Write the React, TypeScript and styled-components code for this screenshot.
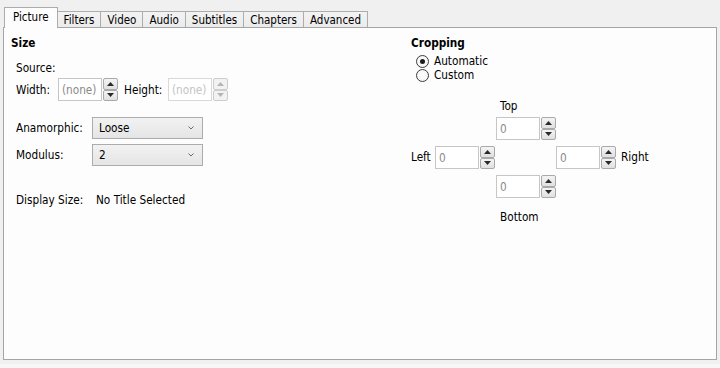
import * as React from "react";
import styled, { createGlobalStyle } from "styled-components";

const GlobalStyle = createGlobalStyle`
  html, body {
    margin: 0;
    padding: 0;
    background: #f0f0f0;
  }
  body {
    font-family: "DejaVu Sans Condensed", "DejaVu Sans", Tahoma, sans-serif;
    font-size: 11.7px;
    color: #000;
  }
`;

const Window = styled.div`
  width: 720px;
  height: 368px;
  box-sizing: border-box;
  padding: 0 3px 8px 3px;
  display: flex;
  flex-direction: column;
  background: linear-gradient(#f0f0f0 0, #f0f0f0 364px, #f7f7f7 364px);
`;

const TabStrip = styled.div`
  display: flex;
  align-items: flex-end;
  height: 27px;
  padding-left: 1px;
  position: relative;
  z-index: 2;
  font-size: 11.5px;
`;

const Tab = styled.div<{ $active?: boolean }>`
  box-sizing: border-box;
  height: ${(p) => (p.$active ? "21px" : "16px")};
  margin-bottom: ${(p) => (p.$active ? "-1px" : "0")};
  padding: 0 ${(p) => (p.$active ? "8px" : "6px")} ${(p) => (p.$active ? "2px" : "0")};
  display: flex;
  align-items: center;
  border: 1px solid #acacac;
  border-bottom: none;
  margin-right: -1px;
  background: ${(p) => (p.$active ? "#fdfdfd" : "linear-gradient(#f3f3f3, #ebebeb)")};
  position: relative;
  z-index: ${(p) => (p.$active ? 2 : 1)};
  white-space: nowrap;
`;

const Panel = styled.div`
  flex: 1;
  box-sizing: border-box;
  border: 1px solid #a5a5a5;
  background: #fdfdfd;
  display: grid;
  grid-template-columns: 400px 1fr;
  align-items: start;
  padding: 7px 0 0 7px;
`;

const Column = styled.div`
  display: flex;
  flex-direction: column;
  align-items: flex-start;
`;

const GroupTitle = styled.div`
  font-weight: bold;
  line-height: 16px;
`;

const Indented = styled.div<{ $indent: number }>`
  display: flex;
  flex-direction: column;
  align-items: flex-start;
  padding-left: ${(p) => p.$indent}px;
`;

const Text = styled.div<{ $top?: number }>`
  line-height: 16px;
  margin-top: ${(p) => p.$top ?? 0}px;
`;

const Row = styled.div<{ $top: number }>`
  display: flex;
  align-items: center;
  margin-top: ${(p) => p.$top}px;
`;

const Label = styled.span<{ $width?: number; $left?: number }>`
  display: inline-block;
  width: ${(p) => (p.$width ? `${p.$width}px` : "auto")};
  margin-left: ${(p) => p.$left ?? 0}px;
  white-space: nowrap;
`;

/* spin box */

const SpinBox = styled.div`
  display: inline-flex;
  width: 60px;
  height: 23px;
  gap: 1px;
`;

const SpinField = styled.div<{ $disabled?: boolean }>`
  box-sizing: border-box;
  width: 44px;
  height: 100%;
  border: 1px solid ${(p) => (p.$disabled ? "#d9d9d9" : "#c6c6c6")};
  background: #fff;
  color: ${(p) => (p.$disabled ? "#c4c4c4" : "#8a8a8a")};
  padding: 0 3px;
  display: flex;
  align-items: center;
`;

const SpinButtons = styled.div`
  display: flex;
  flex-direction: column;
  width: 15px;
  height: 100%;
`;

const SpinButton = styled.div<{ $disabled?: boolean }>`
  flex: 1;
  box-sizing: border-box;
  border: 1px solid ${(p) => (p.$disabled ? "#cdcdcd" : "#a9a9a9")};
  border-radius: 2px;
  background: ${(p) =>
    p.$disabled ? "#f2f2f2" : "linear-gradient(#f4f4f4, #e0e0e0)"};
  display: flex;
  align-items: center;
  justify-content: center;
`;

const Arrow = ({ down, disabled }: { down?: boolean; disabled?: boolean }) => (
  <svg width="7" height="4" viewBox="0 0 7 4">
    <polygon
      points={down ? "0,0 7,0 3.5,4" : "0,4 7,4 3.5,0"}
      fill={disabled ? "#b5b5b5" : "#2a2a2a"}
    />
  </svg>
);

const Spin = ({ value, disabled }: { value: string; disabled?: boolean }) => (
  <SpinBox>
    <SpinField $disabled={disabled}>{value}</SpinField>
    <SpinButtons>
      <SpinButton $disabled={disabled}>
        <Arrow disabled={disabled} />
      </SpinButton>
      <SpinButton $disabled={disabled}>
        <Arrow down disabled={disabled} />
      </SpinButton>
    </SpinButtons>
  </SpinBox>
);

/* combo box */

const ComboBox = styled.div`
  box-sizing: border-box;
  width: 111px;
  height: 22px;
  border: 1px solid #acacac;
  background: linear-gradient(#f2f2f2, #e5e5e5);
  padding: 0 8px 0 6px;
  display: flex;
  align-items: center;
  justify-content: space-between;
`;

const Combo = ({ value }: { value: string }) => (
  <ComboBox>
    <span>{value}</span>
    <svg width="6" height="4" viewBox="0 0 6 4">
      <polyline points="0.5,0.5 3,3 5.5,0.5" fill="none" stroke="#6b6b6b" strokeWidth="1" />
    </svg>
  </ComboBox>
);

/* radio */

const RadioRow = styled.div`
  display: flex;
  align-items: center;
  gap: 5px;
  height: 14px;
`;

const RadioCircle = styled.span<{ $checked?: boolean }>`
  box-sizing: border-box;
  width: 13px;
  height: 13px;
  border-radius: 50%;
  border: 1px solid #3c3c3c;
  background: radial-gradient(circle, #ffffff 0, #f1f1f1 100%);
  display: flex;
  align-items: center;
  justify-content: center;

  &::after {
    content: "";
    display: ${(p) => (p.$checked ? "block" : "none")};
    width: 5px;
    height: 5px;
    border-radius: 50%;
    background: #1c1c1c;
  }
`;

const RadioGroup = styled.div`
  display: flex;
  flex-direction: column;
  margin-top: 3px;
  padding-left: 5px;
`;

/* cropping grid */

const CropGrid = styled.div`
  display: grid;
  grid-template-columns: 24px 61px 60px 60px auto;
  grid-template-areas:
    ". . toplabel . ."
    ". . top . ."
    "leftlabel left . right rightlabel"
    ". . bottom . ."
    ". . bottomlabel . .";
  align-items: start;
  margin-top: 16px;
`;

const CropCell = styled.div<{ $area: string; $top?: number; $pad?: number }>`
  grid-area: ${(p) => p.$area};
  margin-top: ${(p) => p.$top ?? 0}px;
  padding-left: ${(p) => p.$pad ?? 0}px;
  line-height: 16px;
`;

const SideLabel = styled(CropCell)`
  line-height: 23px;
`;

const tabs = ["Picture", "Filters", "Video", "Audio", "Subtitles", "Chapters", "Advanced"];

export default function App() {
  return (
    <>
      <GlobalStyle />
      <Window>
        <TabStrip>
          {tabs.map((t, i) => (
            <Tab key={t} $active={i === 0}>
              {t}
            </Tab>
          ))}
        </TabStrip>
        <Panel>
          <Column>
            <GroupTitle>Size</GroupTitle>
            <Indented $indent={5}>
              <Text $top={9}>Source:</Text>
              <Row $top={2}>
                <Label $width={42}>Width:</Label>
                <Spin value="(none)" />
                <Label $width={44} $left={6}>
                  Height:
                </Label>
                <Spin value="(none)" disabled />
              </Row>
              <Row $top={16}>
                <Label $width={76}>Anamorphic:</Label>
                <Combo value="Loose" />
              </Row>
              <Row $top={5}>
                <Label $width={76}>Modulus:</Label>
                <Combo value="2" />
              </Row>
              <Row $top={27}>
                <Label $width={80}>Display Size:</Label>
                <Label>No Title Selected</Label>
              </Row>
            </Indented>
          </Column>
          <Column>
            <GroupTitle>Cropping</GroupTitle>
            <RadioGroup>
              <RadioRow>
                <RadioCircle $checked />
                <span>Automatic</span>
              </RadioRow>
              <RadioRow>
                <RadioCircle />
                <span>Custom</span>
              </RadioRow>
            </RadioGroup>
            <CropGrid>
              <CropCell $area="toplabel" $pad={4}>
                Top
              </CropCell>
              <CropCell $area="top" $top={3}>
                <Spin value="0" />
              </CropCell>
              <SideLabel $area="leftlabel" $top={6}>
                Left
              </SideLabel>
              <CropCell $area="left" $top={6}>
                <Spin value="0" />
              </CropCell>
              <CropCell $area="right" $top={6}>
                <Spin value="0" />
              </CropCell>
              <SideLabel $area="rightlabel" $top={6} $pad={5}>
                Right
              </SideLabel>
              <CropCell $area="bottom" $top={6}>
                <Spin value="0" />
              </CropCell>
              <CropCell $area="bottomlabel" $top={11} $pad={4}>
                Bottom
              </CropCell>
            </CropGrid>
          </Column>
        </Panel>
      </Window>
    </>
  );
}
